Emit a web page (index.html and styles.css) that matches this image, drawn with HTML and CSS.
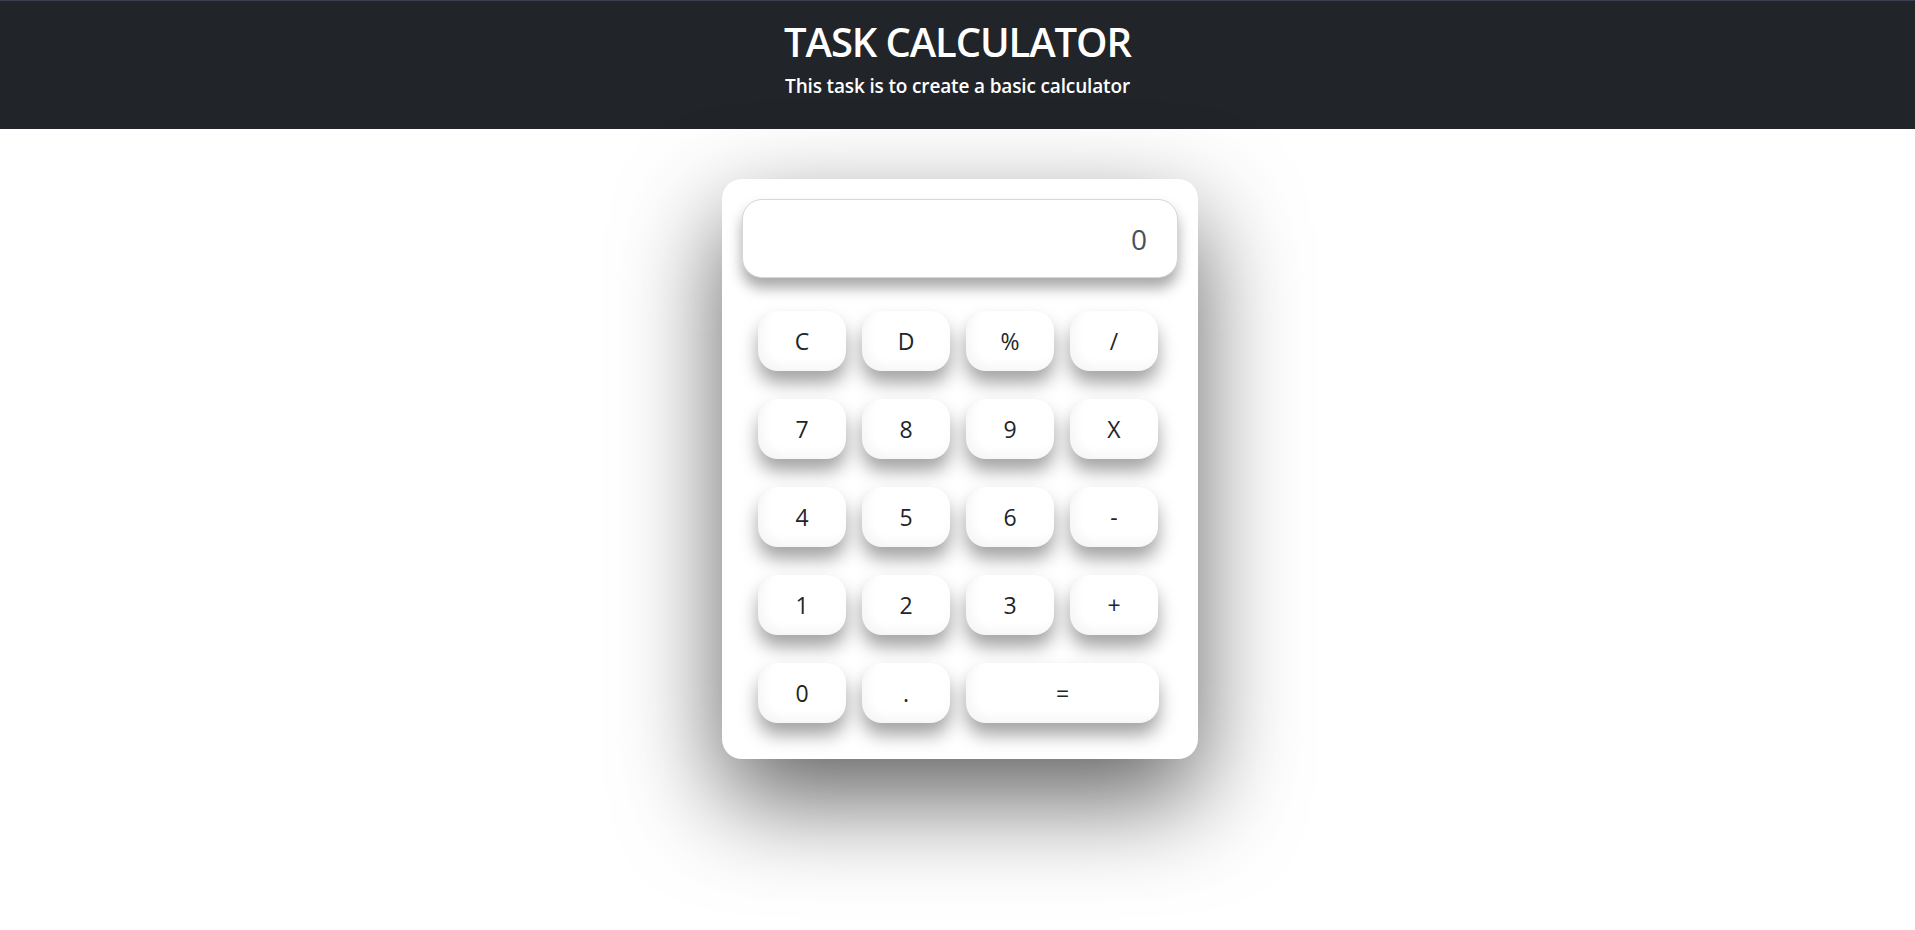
FILE: index.html
```html
<!DOCTYPE html>
<html lang="en">
<head>
<meta charset="utf-8">
<title>Task Calculator</title>
<link rel="stylesheet" href="styles.css">
</head>
<body>
<header class="topbar">
  <h1 class="title">TASK CALCULATOR</h1>
  <h5 class="subtitle">This task is to create a basic calculator</h5>
</header>
<main class="page">
  <div class="calc">
    <div class="display">0</div>
    <div class="keys">
      <button class="key">C</button>
      <button class="key">D</button>
      <button class="key">%</button>
      <button class="key">/</button>
      <button class="key">7</button>
      <button class="key">8</button>
      <button class="key">9</button>
      <button class="key">X</button>
      <button class="key">4</button>
      <button class="key">5</button>
      <button class="key">6</button>
      <button class="key">-</button>
      <button class="key">1</button>
      <button class="key">2</button>
      <button class="key">3</button>
      <button class="key">+</button>
      <button class="key">0</button>
      <button class="key">.</button>
      <button class="key key-wide">=</button>
    </div>
  </div>
</main>
</body>
</html>
```
FILE: styles.css
```css
* { box-sizing: border-box; }

html, body {
  margin: 0;
  padding: 0;
  background: #fff;
  font-family: "Open Sans", "Noto Sans", "Liberation Sans", sans-serif;
  color: #212529;
}

body {
  min-height: 100vh;
}

.topbar {
  background: #212529;
  border-top: 1px solid #3b3e50;
  height: 129px;
  display: flex;
  flex-direction: column;
  align-items: center;
  padding-top: 17px;
  color: #fff;
}

.title {
  margin: 0;
  font-size: 40px;
  font-weight: 600;
  line-height: 48px;
  letter-spacing: -1.1px;
}

.subtitle {
  margin: 0;
  margin-top: 7px;
  font-size: 19px;
  font-weight: 600;
  line-height: 26px;
  letter-spacing: -0.15px;
}

.page {
  display: flex;
  justify-content: center;
  padding-top: 50px;
  padding-left: 5px;
  min-height: 801px;
}

.calc {
  width: 476px;
  height: 580px;
  background: #fff;
  border-radius: 20px;
  padding: 20px 20px 36px;
  box-shadow: 0 40px 100px rgba(0, 0, 0, 0.62);
}

.display {
  height: 79px;
  border: 1px solid #d6d6d6;
  border-radius: 20px;
  background: #fff;
  box-shadow: 0 10px 14px rgba(0, 0, 0, 0.34);
  display: flex;
  align-items: center;
  justify-content: flex-end;
  padding-right: 30px;
  font-size: 28px;
  font-weight: 400;
  color: #495057;
}

.keys {
  margin-top: 33px;
  padding: 0 16px;
  display: grid;
  grid-template-columns: repeat(4, 88px);
  grid-auto-rows: 60px;
  column-gap: 16px;
  row-gap: 28px;
}

.key {
  border: none;
  border-radius: 20px;
  background: #fff;
  font-family: inherit;
  font-size: 23px;
  color: #212529;
  padding: 0;
  box-shadow: 0 12px 18px rgba(0, 0, 0, 0.36),
              inset 6px -6px 10px rgba(0, 0, 0, 0.035);
}

.key-wide {
  grid-column: span 2;
  width: 193px;
}
```
